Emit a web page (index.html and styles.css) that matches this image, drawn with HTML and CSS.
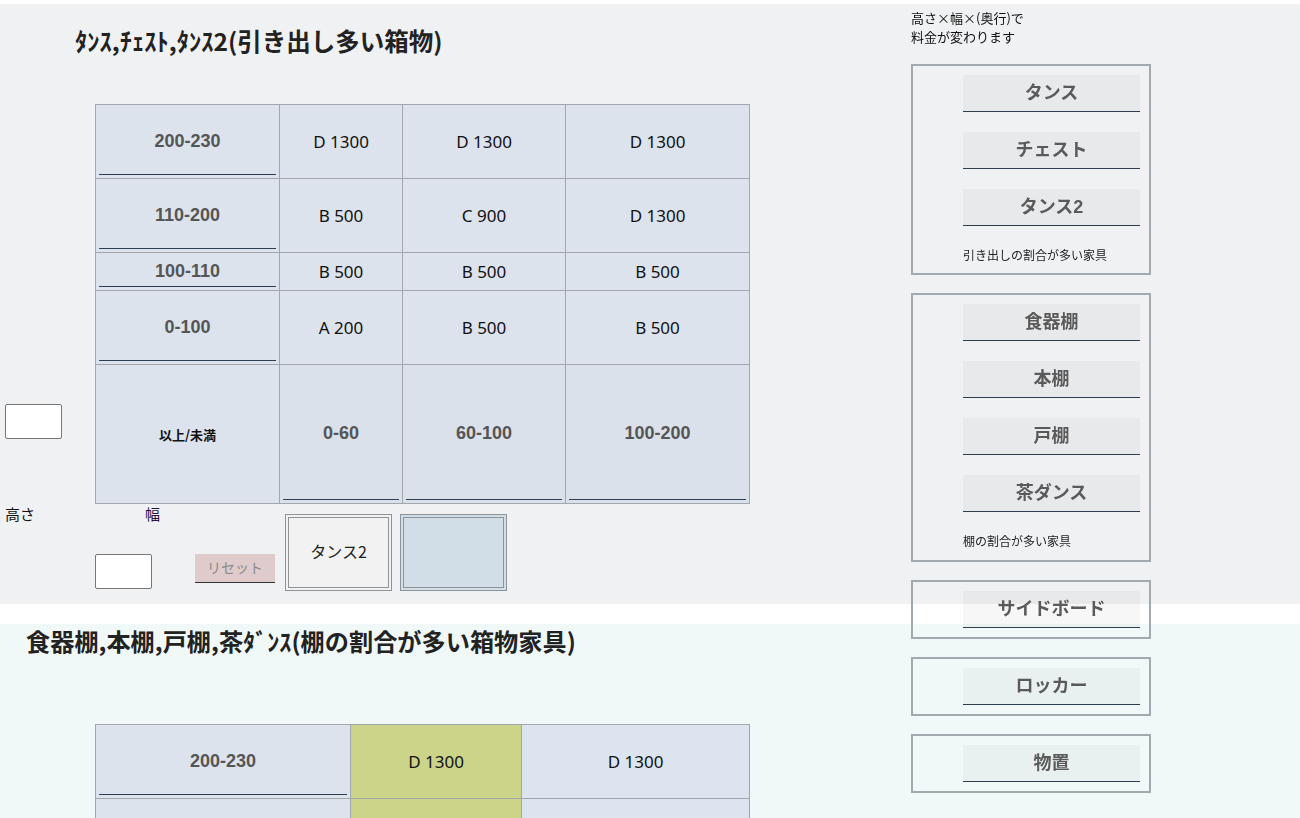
FILE: index.html
```html
<!DOCTYPE html>
<html lang="ja">
<head>
<meta charset="utf-8">
<title>料金表</title>
<link rel="stylesheet" href="styles.css">
</head>
<body>
<section class="sec sec-top">
  <h2 class="title title-1">ﾀﾝｽ,ﾁｪｽﾄ,ﾀﾝｽ2(引き出し多い箱物)</h2>
  <div class="table-row">
    <input class="num-input in-h" type="text">
    <div class="grid grid-4">
      <div class="hd"><span>200-230</span></div>
      <div class="cell">D 1300</div>
      <div class="cell">D 1300</div>
      <div class="cell">D 1300</div>

      <div class="hd"><span>110-200</span></div>
      <div class="cell">B 500</div>
      <div class="cell">C 900</div>
      <div class="cell">D 1300</div>

      <div class="hd"><span>100-110</span></div>
      <div class="cell">B 500</div>
      <div class="cell">B 500</div>
      <div class="cell">B 500</div>

      <div class="hd"><span>0-100</span></div>
      <div class="cell">A 200</div>
      <div class="cell">B 500</div>
      <div class="cell">B 500</div>

      <div class="hd corner-cell"><span class="corner">以上/未満</span></div>
      <div class="hd foot"><span>0-60</span></div>
      <div class="hd foot"><span>60-100</span></div>
      <div class="hd foot"><span>100-200</span></div>
    </div>
  </div>
  <div class="controls">
    <div class="ctl-left">
      <div class="labels"><span class="lb-h">高さ</span><span class="lb-w">幅</span></div>
      <div class="ctl-row">
        <input class="num-input in-w" type="text">
        <button class="reset" type="button">リセット</button>
      </div>
    </div>
    <div class="sel-box">タンス2</div>
    <div class="sel-box blue"></div>
  </div>
</section>

<section class="sec sec-bottom">
  <h2 class="title title-2">食器棚,本棚,戸棚,茶ﾀﾞﾝｽ(棚の割合が多い箱物家具)</h2>
  <div class="grid grid-3">
    <div class="hd"><span>200-230</span></div>
    <div class="cell olive">D 1300</div>
    <div class="cell alt">D 1300</div>

    <div class="hd empty"></div>
    <div class="cell olive"></div>
    <div class="cell alt"></div>
  </div>
</section>

<aside class="sidebar">
  <p class="note">高さ×幅×(奥行)で<br>料金が変わります</p>
  <div class="group">
    <button class="cat" type="button">タンス</button>
    <button class="cat" type="button">チェスト</button>
    <button class="cat" type="button">タンス2</button>
    <p class="desc desc-tight">引き出しの割合が多い家具</p>
  </div>
  <div class="group">
    <button class="cat" type="button">食器棚</button>
    <button class="cat" type="button">本棚</button>
    <button class="cat" type="button">戸棚</button>
    <button class="cat" type="button">茶ダンス</button>
    <p class="desc">棚の割合が多い家具</p>
  </div>
  <div class="group">
    <button class="cat" type="button">サイドボード</button>
  </div>
  <div class="group">
    <button class="cat" type="button">ロッカー</button>
  </div>
  <div class="group">
    <button class="cat" type="button">物置</button>
  </div>
</aside>
</body>
</html>
```

FILE: styles.css
```css
* { box-sizing: border-box; }

html, body {
  margin: 0;
  padding: 0;
  background: #ffffff;
}

body {
  width: 1300px;
  font-family: "Noto Sans CJK JP", sans-serif;
  color: #222222;
}

.sec { width: 1300px; }

.sec-top {
  margin-top: 4px;
  background: #f0f1f3;
  padding-bottom: 13px;
}

.sec-bottom {
  margin-top: 20px;
  background: #f0f9f8;
}

.title {
  margin: 0;
  font-family: "Noto Sans CJK JP", sans-serif;
  font-size: 24.5px;
  line-height: 34px;
  font-weight: 700;
  color: #222222;
}

.title-1 {
  padding: 20px 0 0 75px;
  margin-bottom: 46px;
}

.title-2 {
  padding: 0 0 0 26px;
  margin-bottom: 66px;
  font-size: 24.2px;
}

.table-row {
  display: flex;
  align-items: flex-end;
}

.num-input {
  flex: none;
  width: 57px;
  height: 35px;
  padding: 0;
  border: 1px solid #767676;
  border-radius: 2px;
  background: #ffffff;
}

.in-h { margin: 0 33px 65px 5px; }

.grid {
  flex: none;
  display: grid;
  gap: 1px;
  padding: 1px;
  background: #a2a7ae;
}

.grid-4 {
  grid-template-columns: 183px 122px 162px 183px;
  grid-template-rows: 73px 73px 37px 73px 138px;
}

.grid-3 {
  width: 655px;
  margin-left: 95px;
  grid-template-columns: 254px 170px 227px;
  grid-template-rows: 73px 20px;
  padding-bottom: 0;
}

.cell {
  display: flex;
  align-items: center;
  justify-content: center;
  background: #dce3ed;
  font-family: "Noto Sans", "Noto Sans CJK JP", sans-serif;
  font-size: 17px;
  color: #111111;
}

.cell.olive { background: #ccd48a; }
.cell.alt { background: #dce5ef; }

.hd {
  display: flex;
  padding: 3px;
  background: #dce3ed;
}

.hd.foot { background: #dbe1ea; }

.hd span {
  flex: 1;
  display: flex;
  align-items: center;
  justify-content: center;
  border-bottom: 1px solid #2c3e50;
  font-family: "Liberation Sans", "Noto Sans CJK JP", sans-serif;
  font-size: 18px;
  font-weight: 700;
  color: #555555;
}

.hd span.corner {
  border-bottom: none;
  font-family: "Noto Sans CJK JP", sans-serif;
  font-size: 13px;
  color: #111111;
}

.controls {
  display: flex;
  align-items: flex-start;
}

.ctl-left {
  flex: none;
  width: 285px;
}

.labels {
  display: flex;
  height: 20px;
  font-size: 15px;
  line-height: 20px;
  color: #111111;
}

.lb-h {
  margin-left: 5px;
  width: 140px;
}

.lb-w { color: #2a1140; }

.ctl-row {
  display: flex;
  align-items: flex-start;
  margin-top: 30px;
}

.in-w { margin-left: 95px; }

.reset {
  flex: none;
  margin-left: 43px;
  width: 80px;
  height: 29px;
  padding: 0 0 2px;
  border: none;
  border-bottom: 1px solid #333333;
  background: #dfcbcb;
  font-family: "Noto Sans CJK JP", sans-serif;
  font-size: 14px;
  color: #8a8a8a;
}

.sel-box {
  flex: none;
  margin-top: 10px;
  width: 107px;
  height: 77px;
  border: 4px double #8e9397;
  display: flex;
  align-items: center;
  justify-content: center;
  padding-bottom: 4px;
  font-size: 16px;
  color: #222222;
  background: #f2f2f3;
}

.sel-box.blue {
  margin-left: 8px;
  background: #d1dee8;
}

.sidebar {
  position: fixed;
  left: 911px;
  top: 8px;
  width: 240px;
}

.note {
  margin: 0 0 18px;
  font-size: 13px;
  line-height: 19px;
  color: #111111;
}

.group {
  display: flex;
  flex-direction: column;
  border: 2px solid #a3aaaf;
  padding: 9px 9px 9px 50px;
  margin-bottom: 18px;
}

.cat {
  display: flex;
  align-items: center;
  justify-content: center;
  width: 177px;
  height: 37px;
  padding: 0 0 5px;
  border: none;
  border-bottom: 1px solid #2c3e50;
  background: rgba(0, 0, 0, 0.03);
  font-family: "Liberation Sans", "Noto Sans CJK JP", sans-serif;
  font-size: 18px;
  font-weight: 700;
  color: #5a5a5a;
}

.cat + .cat { margin-top: 20px; }

.desc {
  margin: 20px 0 1px;
  font-size: 12px;
  line-height: 18px;
  color: #222222;
}

.desc-tight { margin-bottom: 0; }
```
